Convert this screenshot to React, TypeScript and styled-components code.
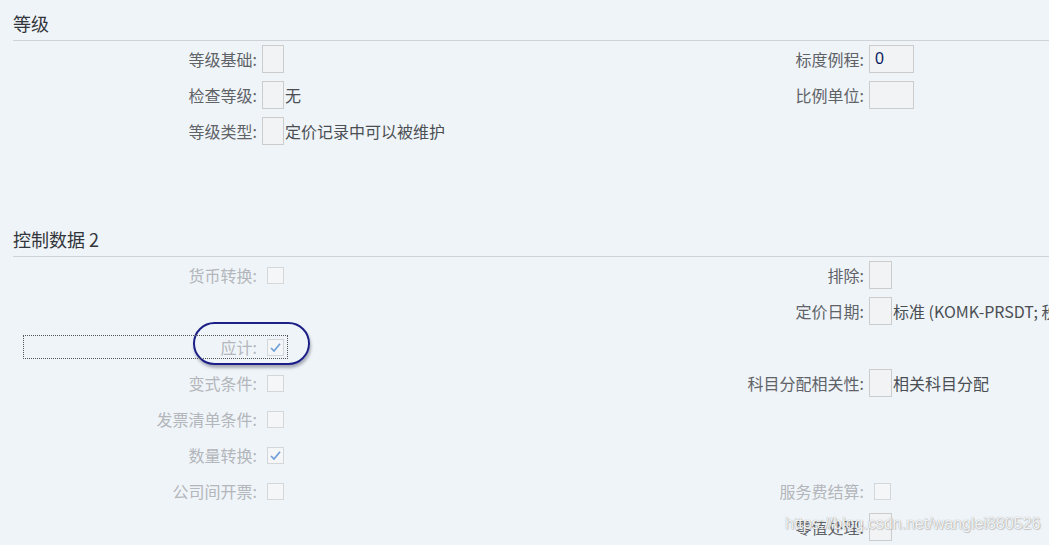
import React from "react";
import styled, { createGlobalStyle } from "styled-components";

const Global = createGlobalStyle`
  html, body { margin: 0; padding: 0; background: #eff4f9; }
  body {
    font-family: "Noto Sans CJK SC", "Noto Sans", sans-serif;
    overflow: hidden;
    width: 1049px;
    height: 545px;
  }
`;

const Page = styled.div`
  position: relative;
  width: 1049px;
  height: 545px;
  overflow: hidden;
  background: #eff4f9;
`;

const Section = styled.section<{ $bottom: number }>`
  padding-bottom: ${(p) => p.$bottom}px;
`;

const SectionTitle = styled.h2`
  margin: 0 0 0 13px;
  padding-top: 9px;
  height: 31px;
  line-height: 28px;
  font-size: 18px;
  font-weight: normal;
  color: #32363a;
  border-bottom: 1px solid #cfd2d6;
`;

const FormGrid = styled.div`
  display: grid;
  grid-template-columns: 607px 1fr;
  padding-top: 4px;
`;

const Column = styled.div`
  display: flex;
  flex-direction: column;
  gap: 8px;
`;

const Row = styled.div<{ $focused?: boolean }>`
  position: relative;
  display: grid;
  grid-template-columns: 262px auto 1fr;
  align-items: center;
  height: 28px;
  white-space: nowrap;
  ${(p) =>
    p.$focused &&
    `
    &::after {
      content: "";
      position: absolute;
      left: 23px;
      width: 263px;
      top: 2px;
      bottom: 2px;
      border: 1px dotted #555;
      pointer-events: none;
    }
  `}
`;

const Label = styled.label<{ $disabled?: boolean }>`
  text-align: right;
  font-size: 16px;
  line-height: 28px;
  padding-right: 5px;
  color: ${(p) => (p.$disabled ? "#b3b6ba" : "#5f6367")};
`;

const Box = styled.div<{ $w: number }>`
  box-sizing: border-box;
  width: ${(p) => p.$w}px;
  height: 28px;
  background: #f2f3f4;
  border: 1px solid #cccccc;
  font-family: "Liberation Sans", Arial, sans-serif;
  font-size: 16px;
  line-height: 26px;
  padding-left: 5px;
  color: #0b1f66;
`;

const CheckSlot = styled.div`
  width: 22px;
  display: flex;
  justify-content: flex-end;
  align-items: center;
`;

const Check = styled.div`
  box-sizing: border-box;
  width: 17px;
  height: 17px;
  border: 1px solid #d4d7da;
  background: #f4f6f8;
  display: flex;
  align-items: center;
  justify-content: center;
`;

const Trailing = styled.span`
  font-size: 16px;
  color: #4b4f53;
  padding-left: 1px;
  overflow: hidden;
`;

const Oval = styled.span`
  position: absolute;
  left: 193px;
  top: -11px;
  width: 117px;
  height: 43px;
  box-sizing: border-box;
  border: 2px solid #1b1f86;
  border-radius: 22px;
  box-shadow: 1px 3px 3px rgba(40, 40, 60, 0.35);
  pointer-events: none;
`;

const Watermark = styled.div`
  position: absolute;
  left: 785px;
  top: 515px;
  font-family: "Liberation Sans", Arial, sans-serif;
  font-size: 16px;
  color: rgba(255, 255, 255, 0.9);
  text-shadow: 0 0 1px rgba(110, 110, 110, 0.7), 1px 1px 1px rgba(90, 90, 90, 0.25);
  white-space: nowrap;
  pointer-events: none;
`;

const Tick = () => (
  <svg width="13" height="13" viewBox="0 0 13 13">
    <path d="M2 7 L5 10 L11 2.8" fill="none" stroke="#6f9fd6" strokeWidth="1.7" />
  </svg>
);

type Field =
  | { kind: "box"; w: number; value?: string; after?: string }
  | { kind: "check"; checked?: boolean };

type RowDef = { label?: string; disabled?: boolean; field?: Field; focused?: boolean };

const FormRow: React.FC<{ def: RowDef }> = ({ def }) => {
  if (!def.label) return <Row />;
  const f = def.field!;
  return (
    <Row $focused={def.focused}>
      <Label $disabled={def.disabled}>{def.label}:</Label>
      {f.kind === "box" ? (
        <Box $w={f.w}>{f.value}</Box>
      ) : (
        <CheckSlot>
          <Check>{f.checked && <Tick />}</Check>
        </CheckSlot>
      )}
      <Trailing>{f.kind === "box" ? f.after : null}</Trailing>
      {def.focused && <Oval />}
    </Row>
  );
};

const s1Left: RowDef[] = [
  { label: "等级基础", field: { kind: "box", w: 22 } },
  { label: "检查等级", field: { kind: "box", w: 22, after: "无" } },
  { label: "等级类型", field: { kind: "box", w: 22, after: "定价记录中可以被维护" } },
];
const s1Right: RowDef[] = [
  { label: "标度例程", field: { kind: "box", w: 45, value: "0" } },
  { label: "比例单位", field: { kind: "box", w: 45 } },
];

const s2Left: RowDef[] = [
  { label: "货币转换", disabled: true, field: { kind: "check" } },
  {},
  { label: "应计", disabled: true, focused: true, field: { kind: "check", checked: true } },
  { label: "变式条件", disabled: true, field: { kind: "check" } },
  { label: "发票清单条件", disabled: true, field: { kind: "check" } },
  { label: "数量转换", disabled: true, field: { kind: "check", checked: true } },
  { label: "公司间开票", disabled: true, field: { kind: "check" } },
];
const s2Right: RowDef[] = [
  { label: "排除", field: { kind: "box", w: 23 } },
  { label: "定价日期", field: { kind: "box", w: 23, after: "标准 (KOMK-PRSDT; 税务日期 = 定价日期)" } },
  {},
  { label: "科目分配相关性", field: { kind: "box", w: 23, after: "相关科目分配" } },
  {},
  {},
  { label: "服务费结算", disabled: true, field: { kind: "check" } },
  { label: "零值处理", field: { kind: "box", w: 23 } },
];

export default function App() {
  return (
    <Page>
      <Global />
      <Section $bottom={71}>
        <SectionTitle>等级</SectionTitle>
        <FormGrid>
          <Column>
            {s1Left.map((r, i) => (
              <FormRow key={i} def={r} />
            ))}
          </Column>
          <Column>
            {s1Right.map((r, i) => (
              <FormRow key={i} def={r} />
            ))}
          </Column>
        </FormGrid>
      </Section>
      <Section $bottom={0}>
        <SectionTitle>控制数据 2</SectionTitle>
        <FormGrid>
          <Column>
            {s2Left.map((r, i) => (
              <FormRow key={i} def={r} />
            ))}
          </Column>
          <Column>
            {s2Right.map((r, i) => (
              <FormRow key={i} def={r} />
            ))}
          </Column>
        </FormGrid>
      </Section>
      <Watermark>https://blog.csdn.net/wanglei880526</Watermark>
    </Page>
  );
}
